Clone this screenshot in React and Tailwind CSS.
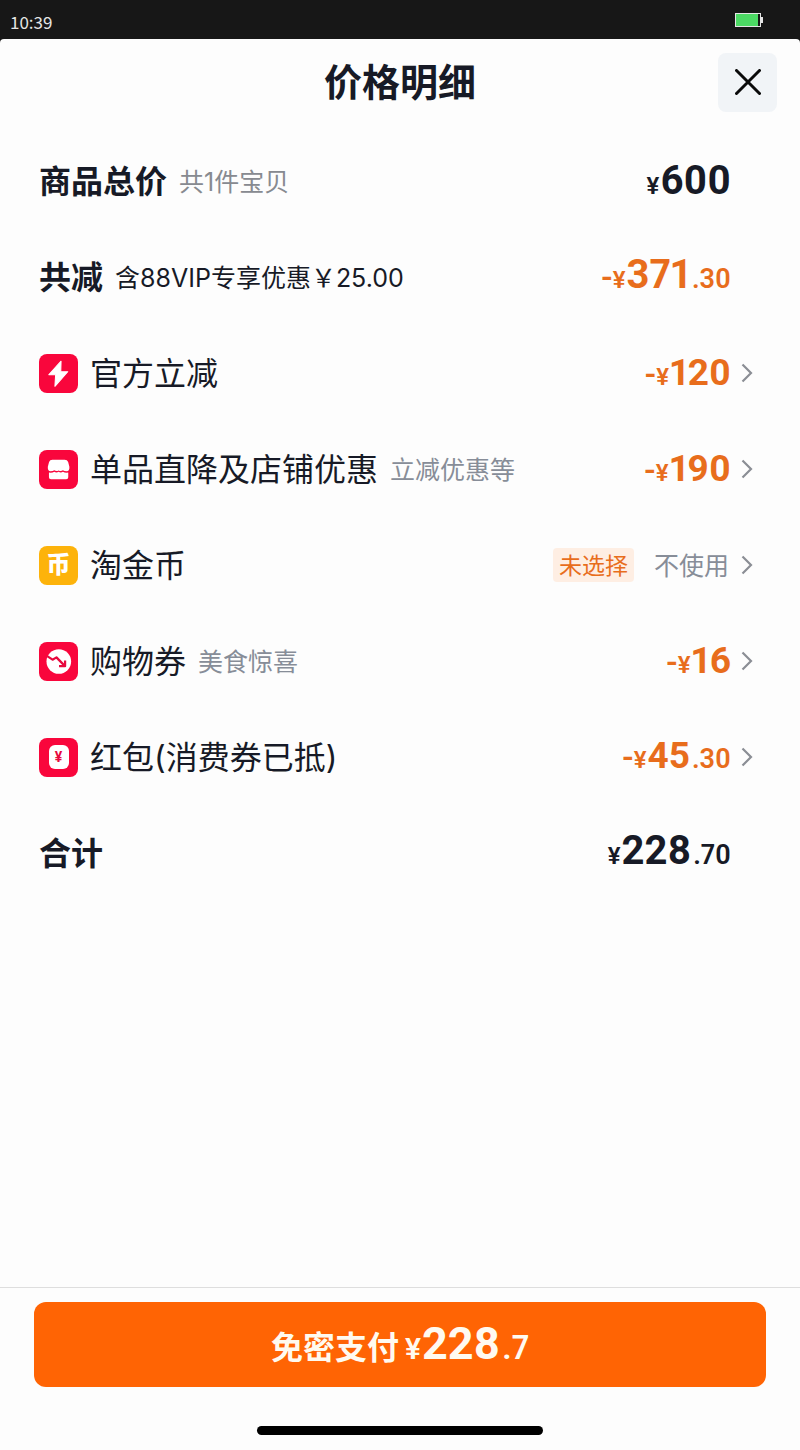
import React from "react";

// Coloured square that sits before a discount name
function IconTile({ color = "bg-[#f9063c]", children }) {
  return (
    <span className={`flex size-[39px] shrink-0 items-center justify-center rounded-lg text-white ${color}`}>
      {children}
    </span>
  );
}

function BoltIcon() {
  return (
    <IconTile>
      <svg viewBox="0 0 38 38" className="size-full" aria-hidden="true">
        <path
          d="M21.5 7 L9.5 20.2 H16.2 L15.5 31.5 L28 17.2 H21.2 Z"
          fill="currentColor"
          stroke="currentColor"
          strokeWidth="1"
          strokeLinejoin="round"
        />
      </svg>
    </IconTile>
  );
}

function ShopIcon() {
  return (
    <IconTile>
      <svg viewBox="0 0 38 38" className="size-full" fill="currentColor" aria-hidden="true">
        <path d="M13 9.5 H25 Q27.6 9.5 28.4 11.8 L29.6 16.2 Q30 20.2 27 20.8 Q24.5 20.8 23.3 19.8 Q21.3 21.2 19.1 19.9 Q17 21.2 14.9 19.8 Q13.5 20.8 11.3 20.8 Q8.2 20.2 8.6 16.2 L9.8 11.8 Q10.6 9.5 13 9.5 Z" />
        <path d="M9.7 22 Q12.8 22.5 14.9 21.3 Q17 22.6 19.1 21.3 Q21.3 22.6 23.3 21.3 Q25.5 22.5 28.5 22 V26.5 Q28.5 28.5 26.5 28.5 H11.7 Q9.7 28.5 9.7 26.5 Z" />
      </svg>
    </IconTile>
  );
}

function CoinIcon() {
  return (
    <IconTile color="bg-[#fdb30b]">
      <span className="text-2xl leading-6 font-black">币</span>
    </IconTile>
  );
}

function VoucherIcon() {
  return (
    <IconTile>
      <svg viewBox="0 0 38 38" className="size-full" aria-hidden="true">
        <circle cx="19.3" cy="19" r="12" fill="currentColor" />
        <g fill="none" stroke="#e8093e" strokeWidth="2.2" strokeLinejoin="round">
          <path d="M8 13.8 L13.2 17.2 L17 15 L24.6 22.8" />
          <path d="M25.4 18 V23.6 H19.5" />
        </g>
      </svg>
    </IconTile>
  );
}

function RedPacketIcon() {
  return (
    <IconTile>
      <span className="flex h-6 w-5 items-center justify-center rounded-md bg-white font-[Roboto] text-sm font-bold text-[#e8093e]">
        ¥
      </span>
    </IconTile>
  );
}

function ChevronIcon() {
  return (
    <svg viewBox="0 0 12 20" className="h-5 w-3" fill="none" stroke="#8b8e95" strokeWidth="2.2" aria-hidden="true">
      <path d="M1.5 1.5 L10 10 L1.5 18.5" />
    </svg>
  );
}

const priceSizes = {
  md: { whole: "text-[37px]", cents: "text-[27px]", currency: "text-2xl" },
  lg: { whole: "text-[40px]", cents: "text-[27px]", currency: "text-2xl" },
  xl: { whole: "text-[45px]", cents: "text-[33px]", currency: "text-[30px]" },
};

// Amount with a big integer part and smaller sign, currency and decimals
function Price({ sign, whole, cents, size = "lg" }) {
  const s = priceSizes[size];
  return (
    <span className="flex items-baseline font-[Roboto] leading-10 font-semibold proportional-nums">
      {sign && <span className="text-[32px]">{sign}</span>}
      <span className={`mr-px ${s.currency}`}>¥</span>
      <span className={`font-bold ${s.whole}`}>{whole}</span>
      {cents && <span className={`ml-0.5 ${s.cents}`}>.{cents}</span>}
    </span>
  );
}

function SummaryRow({ label, note, noteClass, priceClass, price }) {
  return (
    <div className="flex h-24 items-center gap-3">
      <span className="pt-0.5 text-[32px] font-bold">{label}</span>
      {note && <span className={`pt-1 text-[25px] ${noteClass}`}>{note}</span>}
      <span className={`mr-[22px] ml-auto ${priceClass}`}>
        <Price {...price} />
      </span>
    </div>
  );
}

function DiscountRow({ icon, label, note, price }) {
  return (
    <button type="button" className="flex h-24 w-full items-center text-left">
      {icon}
      <span className="ml-3 pt-0.5 text-[32px]">{label}</span>
      {note && <span className="ml-3 pt-1 text-[25px] text-[#878d98]">{note}</span>}
      <span className="mr-2.5 ml-auto text-[#e86d1c]">
        {price ? (
          <Price sign="-" size="md" {...price} />
        ) : (
          <span className="flex items-center gap-5 pr-0.5 text-[25px] leading-8">
            <span className="rounded-sm bg-[#feeee3] px-1.5 pt-0.5 text-[23px]">未选择</span>
            <span className="pt-0.5 text-[#878d98]">不使用</span>
          </span>
        )}
      </span>
      <ChevronIcon />
    </button>
  );
}

const discounts = [
  { label: "官方立减", icon: <BoltIcon />, price: { whole: "120" } },
  { label: "单品直降及店铺优惠", note: "立减优惠等", icon: <ShopIcon />, price: { whole: "190" } },
  { label: "淘金币", icon: <CoinIcon /> },
  { label: "购物券", note: "美食惊喜", icon: <VoucherIcon />, price: { whole: "16" } },
  { label: "红包(消费券已抵)", icon: <RedPacketIcon />, price: { whole: "45", cents: "30" } },
];

function App() {
  return (
    <div className="flex min-h-screen flex-col bg-[#171717] font-['Inter','Noto_Sans_CJK_SC',sans-serif] text-[#171a26]">
      {/* Status bar */}
      <div className="flex h-[39px] items-center justify-between pr-[37px] pl-2.5 text-[#e5e5e5]">
        <span className="pt-1 font-['Noto_Sans_CJK_SC',sans-serif] text-[17px] leading-6">10:39</span>
        <svg viewBox="0 0 28 14" className="h-3.5 w-7" aria-label="Battery">
          <rect x="0.5" y="0.5" width="25" height="13" fill="#171717" stroke="#e5e5e5" />
          <rect x="1" y="1" width="22" height="12" fill="#4cd964" />
          <rect x="26" y="4" width="2" height="6" fill="#e5e5e5" />
        </svg>
      </div>

      <main className="flex flex-1 flex-col rounded-t-sm bg-[#fdfdfd]">
        <header className="grid h-[94px] grid-cols-[1fr_auto_1fr] items-center px-[23px] pb-2">
          <h1 className="col-start-2 text-[38px] font-bold">价格明细</h1>
          <button
            type="button"
            aria-label="关闭"
            className="flex size-[59px] items-center justify-center justify-self-end rounded-lg bg-[#f1f4f7]"
          >
            <svg viewBox="0 0 26 26" className="size-[26px]" stroke="#0a0a0a" strokeWidth="3" strokeLinecap="round" aria-hidden="true">
              <path d="M1.5 1.5 L24.5 24.5 M24.5 1.5 L1.5 24.5" />
            </svg>
          </button>
        </header>

        <section className="flex-1 pr-[47px] pl-[39px]">
          <SummaryRow label="商品总价" note="共1件宝贝" noteClass="text-[#878a90]" price={{ whole: "600" }} />
          <SummaryRow
            label="共减"
            note="含88VIP专享优惠￥25.00"
            priceClass="text-[#e86d1c]"
            price={{ sign: "-", whole: "371", cents: "30" }}
          />
          {discounts.map((item) => (
            <DiscountRow key={item.label} {...item} />
          ))}
          <SummaryRow label="合计" price={{ whole: "228", cents: "70" }} />
        </section>

        <footer className="border-t border-[#dedede] px-[34px] pt-3.5 pb-[15px]">
          <button
            type="button"
            className="flex h-[85px] w-full items-center justify-center gap-1.5 rounded-xl bg-[#ff6404] pt-1 text-[32px] font-bold text-[#fffaf0]"
          >
            <span className="pt-0.5">免密支付</span>
            <Price whole="228" cents="7" size="xl" />
          </button>
          <div className="mx-auto mt-[39px] h-[9px] w-[286px] rounded-full bg-black" />
        </footer>
      </main>
    </div>
  );
}

export default App;
